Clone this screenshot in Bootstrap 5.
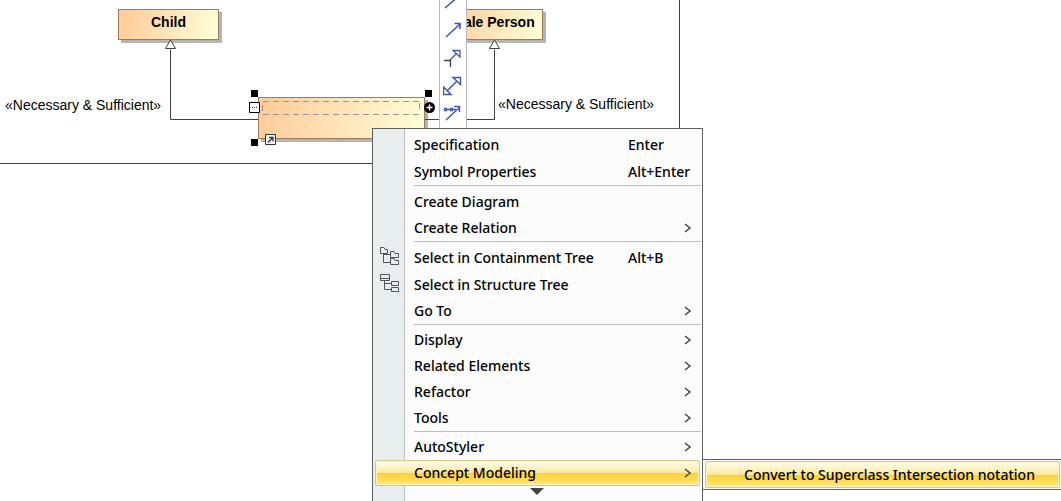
<!DOCTYPE html>
<html lang="en">
<head>
<meta charset="utf-8">
<meta name="viewport" content="width=device-width, initial-scale=1">
<title>Class diagram</title>
<link href="https://cdn.jsdelivr.net/npm/bootstrap@5.3.0/dist/css/bootstrap.min.css" rel="stylesheet">
<style>
  body { font-family: "Liberation Sans", Arial, sans-serif; font-size: 14px; line-height: 20px; color: #000; background: #fff; }
  .stage { min-height: 100vh; }
  .diagram { width: 680px; height: 164px; border: solid #404040; border-width: 0 1px 1px 0; }
  .node { border: 1px solid #9c7a5b; background: linear-gradient(105deg, #ffca98, #ffffd9); box-shadow: 3px 3px 0 #b4b4b4; }
  .node-child { left: 118px; top: 9px; width: 101px; height: 31px; }
  .node-male { left: 444px; top: 9px; width: 99px; height: 31px; }
  .node-new { left: 258px; top: 97px; width: 167px; height: 42px; }
  .node-title { padding-top: 2px; font-weight: 700; text-align: center; }
  .stereo-left { left: 5px; top: 95px; }
  .stereo-right { left: 498px; top: 94px; }
  .palette { left: 439px; top: -12px; width: 28px; height: 150px; background: #fff; border: solid #b8b8b8; border-width: 0 1px; }
  .tool { height: 28px; line-height: 0; color: #4257b5; }
  .ctx { font-family: "Noto Sans", "Open Sans", sans-serif; font-size: 14px; font-weight: 500; border: 1px solid #606060; border-radius: 0; background: #fcfcfc; --bs-dropdown-link-color: #000; }
  .ctx-main { left: 372px; top: 128px; width: 331px; padding: 2px 2px 0; background: linear-gradient(90deg, #e8eeee 31px, #bcbcbc 31px, #bcbcbc 32px, #fcfcfc 32px); }
  .ctx-sub { left: 702px; top: 459px; right: 0; min-width: 0; padding: 1px 1px 1px 2px; border-right: 0; }
  .ctx .dropdown-item { display: flex; align-items: center; height: 26px; padding: 0 7px 0 0; border: 1px solid transparent; font-weight: inherit; line-height: 20px; border-radius: 2px; }
  .ctx .tall { height: 27px; }
  .ctx .chosen { color: #000; border-color: #d8c78c; box-shadow: inset 0 0 0 1px #fff3c4; background: linear-gradient(#fffdf2, #ffe994 50%, #ffd02e 51%, #ffdc5c 80%, #ffe88c); }
  .ctx-sub .chosen { height: 27px; padding-left: 38px; }
  .glyph { width: 38px; height: 22px; padding-left: 4px; flex: none; line-height: 0; }
  .keys { width: 64px; }
  .rule { height: 3px; margin: 0 -1px 0 39px; border: 0; border-top: 1px solid #bcbcbc; opacity: 1; }
  .rule-wide { height: 4px; }
  .more { height: 15px; padding-right: 2px; line-height: 0; }
</style>
</head>
<body>
<main class="stage position-relative overflow-hidden">
  <section class="diagram position-relative" aria-label="Diagram">
    <div class="node node-child position-absolute"><div class="node-title">Child</div></div>
    <div class="node node-male position-absolute"><div class="node-title">Male Person</div></div>
    <div class="stereo-left position-absolute text-nowrap">«Necessary &amp; Sufficient»</div>
    <div class="stereo-right position-absolute text-nowrap">«Necessary &amp; Sufficient»</div>
    <div class="node node-new position-absolute"></div>
    <svg class="position-absolute top-0 start-0" width="679" height="163" fill="none" stroke="#404040">
      <path d="M170.500 49.500V119.500H258M425 119.500H494.500V49.500"/>
      <path fill="#fff" d="M170.500 40L175.500 48.500H165.500ZM494.500 40L499.500 48.500H489.500Z"/>
      <path stroke="#99958c" stroke-dasharray="6 4" d="M263 101.500H420M263 114.500H420M262.500 105V112M419.500 103V110"/>
      <path fill="#000" stroke="none" d="M251 90h7v7h-7zM425 90h7v7h-7zM251 139h7v7h-7z"/>
      <path fill="#fff" stroke="#000" d="M249.500 102.500h10v10h-10z"/>
      <path stroke="#333" stroke-dasharray="1 1" d="M252 107.500h6"/>
      <circle cx="429.500" cy="107.500" r="5.500" fill="#000" stroke="none"/>
      <path stroke="#fff" stroke-width="1.400" d="M426.500 107.500h6M429.500 104.500v6"/>
      <path fill="#f8f8f8" stroke="#333" d="M265.500 134.500h10v10h-10z"/>
      <path stroke="#333" stroke-width="1.300" d="M268 142.500L273 137.500M269 137.500H273V141.500"/>
    </svg>
    <div class="palette position-absolute d-flex flex-column">
      <button class="tool btn p-0 border-0" aria-label="Association"><svg width="20" height="20" fill="none" stroke="currentColor" stroke-width="1.600"><path d="M2 16L16 4"/></svg></button>
      <button class="tool btn p-0 border-0" aria-label="Directed association"><svg width="20" height="20" fill="none" stroke="currentColor" stroke-width="1.600"><path d="M3 17L17 4M11.500 3.500H17V9"/></svg></button>
      <button class="tool btn p-0 border-0" aria-label="Generalization"><svg width="20" height="20" fill="none" stroke="currentColor" stroke-width="1.300"><path d="M7 12L13 6M10 2.500H17V9Z"/><path stroke="#444" d="M1 12.500H7.500V19"/></svg></button>
      <button class="tool btn p-0 border-0" aria-label="Two-way generalization"><svg width="20" height="20" fill="none" stroke="currentColor" stroke-width="1.500"><path d="M4 15L14 5M10 1.500H17.500V8.500ZM.500 11V18.500H8Z"/></svg></button>
      <button class="tool btn p-0 border-0" aria-label="Chained association"><svg width="20" height="20" fill="none" stroke="currentColor" stroke-width="1.500"><path d="M3 16L16.500 3.500M11 2.500H16.500V8M4 5.500H7M10 5.500H13"/><circle cx="2.500" cy="5.500" r="1.200"/><circle cx="8.500" cy="5.500" r="1.200"/></svg></button>
    </div>
  </section>

  <div class="ctx ctx-main dropdown-menu show" role="menu">
    <button class="dropdown-item tall"><span class="glyph"></span><span class="flex-fill">Specification</span><span class="keys">Enter</span></button>
    <button class="dropdown-item tall"><span class="glyph"></span><span class="flex-fill">Symbol Properties</span><span class="keys">Alt+Enter</span></button>
    <hr class="rule rule-wide">
    <button class="dropdown-item"><span class="glyph"></span>Create Diagram</button>
    <button class="dropdown-item"><span class="glyph"></span><span class="flex-fill">Create Relation</span><svg width="8" height="10" fill="none" stroke="#444" stroke-width="1.500"><path d="M1 1L6 5L1 9"/></svg></button>
    <hr class="rule">
    <button class="dropdown-item tall"><span class="glyph"><svg width="20" height="20" fill="none" stroke="#555"><path d="M.500 .500H4L5 2.500H7.500V6.500H.500ZM3.500 6.500V15.500H10M3.500 7.500H10M10.500 4.500H14L15 6.500H18.500V10.500H10.500ZM10.500 11.500H14L15 13.500H18.500V17.500H10.500Z"/></svg></span><span class="flex-fill">Select in Containment Tree</span><span class="keys">Alt+B</span></button>
    <button class="dropdown-item tall"><span class="glyph"><svg width="20" height="20" fill="none" stroke="#555"><path d="M.500 .500H9.500V6.500H.500ZM.500 4.500H9.500M4.500 6.500V15.500H11M4.500 9.500H11M11.500 7.500H18.500V11.500H11.500ZM11.500 13.500H18.500V17.500H11.500Z"/></svg></span>Select in Structure Tree</button>
    <button class="dropdown-item"><span class="glyph"></span><span class="flex-fill">Go To</span><svg width="8" height="10" fill="none" stroke="#444" stroke-width="1.500"><path d="M1 1L6 5L1 9"/></svg></button>
    <hr class="rule">
    <button class="dropdown-item"><span class="glyph"></span><span class="flex-fill">Display</span><svg width="8" height="10" fill="none" stroke="#444" stroke-width="1.500"><path d="M1 1L6 5L1 9"/></svg></button>
    <button class="dropdown-item"><span class="glyph"></span><span class="flex-fill">Related Elements</span><svg width="8" height="10" fill="none" stroke="#444" stroke-width="1.500"><path d="M1 1L6 5L1 9"/></svg></button>
    <button class="dropdown-item"><span class="glyph"></span><span class="flex-fill">Refactor</span><svg width="8" height="10" fill="none" stroke="#444" stroke-width="1.500"><path d="M1 1L6 5L1 9"/></svg></button>
    <button class="dropdown-item"><span class="glyph"></span><span class="flex-fill">Tools</span><svg width="8" height="10" fill="none" stroke="#444" stroke-width="1.500"><path d="M1 1L6 5L1 9"/></svg></button>
    <hr class="rule">
    <button class="dropdown-item"><span class="glyph"></span><span class="flex-fill">AutoStyler</span><svg width="8" height="10" fill="none" stroke="#444" stroke-width="1.500"><path d="M1 1L6 5L1 9"/></svg></button>
    <button class="dropdown-item chosen" aria-expanded="true"><span class="glyph"></span><span class="flex-fill">Concept Modeling</span><svg width="8" height="10" fill="none" stroke="#444" stroke-width="1.500"><path d="M1 1L6 5L1 9"/></svg></button>
    <div class="more text-center"><svg width="14" height="10"><path fill="#444" d="M0 2H14L7 9Z"/></svg></div>
  </div>
  <div class="ctx ctx-sub dropdown-menu show" role="menu">
    <button class="dropdown-item chosen">Convert to Superclass Intersection notation</button>
  </div>
</main>
<script src="https://cdn.jsdelivr.net/npm/bootstrap@5.3.0/dist/js/bootstrap.bundle.min.js"></script>
</body>
</html>
